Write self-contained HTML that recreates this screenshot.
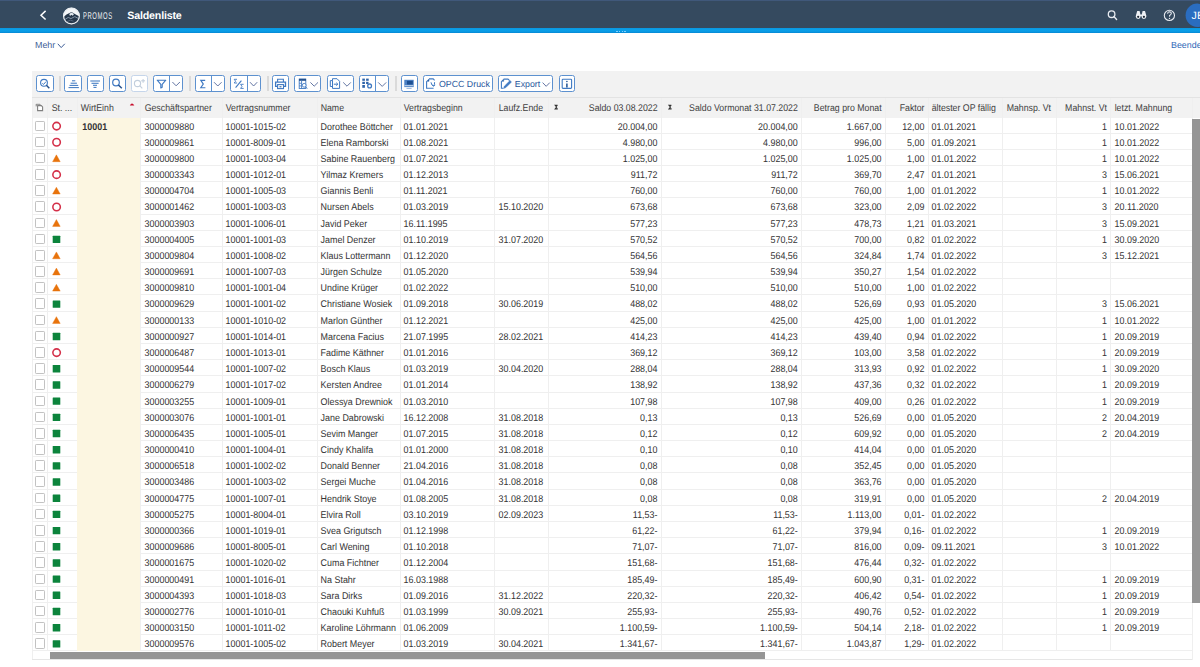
<!DOCTYPE html>
<html><head><meta charset="utf-8"><title>Saldenliste</title><style>
html,body{margin:0;padding:0;}
body{width:1200px;height:667px;overflow:hidden;position:relative;background:#fff;font-family:"Liberation Sans",sans-serif;text-rendering:geometricPrecision;}
.abs{position:absolute;}
#shell{position:absolute;left:0;top:0;width:1200px;height:28px;background:#354a5f;}
#shelltop{position:absolute;left:0;top:0;width:1200px;height:1px;background:#40587a;}
#blue{position:absolute;left:0;top:28px;width:1200px;height:5px;background:linear-gradient(#0b96dd 0,#09a0ea 40%,#0a98e2 75%,#0687d2 100%);}
.title{position:absolute;left:127.3px;top:9.4px;font-size:10.7px;letter-spacing:-0.2px;font-weight:bold;color:#fff;line-height:14px;}
.promos{position:absolute;left:83px;top:11.4px;font-size:9.8px;color:#eef0f2;line-height:12px;transform:scaleX(0.6);transform-origin:0 0;letter-spacing:1px;}
.link{position:absolute;font-size:8.9px;color:#3d5d96;line-height:12px;}
#toolbar{position:absolute;left:31.5px;top:70.5px;width:1168.5px;height:26px;background:#f2f2f2;border-bottom:1px solid #e3e3e3;}
.btn{position:absolute;top:75px;height:15.2px;border:1.15px solid #5d91cf;border-radius:2.5px;background:#fff;}
.btn.dis{border-color:#c5d5ea;}
.sep{position:absolute;top:76px;width:2px;height:14.5px;background:#dadada;}
.div{position:absolute;top:0;width:1.1px;height:15.2px;background:#5d91cf;}
.btxt{position:absolute;top:0.9px;font-size:8.8px;line-height:15.5px;color:#28579c;white-space:nowrap;}
.thead{position:absolute;left:31.8px;width:1168.2px;background:#f2f2f2;}
.cream{position:absolute;background:#fcf6e1;}
.rl{position:absolute;height:1px;background:#efefef;}
.cl{position:absolute;width:1px;background:#efefef;}
.ht{position:absolute;box-sizing:border-box;padding:0 4.1px;font-size:9.8px;transform:scaleX(0.895);transform-origin:0 0;color:#404040;white-space:nowrap;overflow:hidden;}
.td{position:absolute;box-sizing:border-box;padding:0 4.1px 0 3.95px;font-size:9.8px;transform:scaleX(0.91);transform-origin:0 0;color:#333;white-space:nowrap;overflow:hidden;}
.r{text-align:right;}
.b{font-weight:bold;padding-left:5.9px;}
.cb{position:absolute;left:34.6px;width:8.6px;height:8.6px;border:1.2px solid #c2c2c2;border-radius:1.2px;background:#fff;}
.sO{position:absolute;left:52px;width:5.6px;height:5.6px;border:1.7px solid #d62f47;border-radius:50%;}
.sA{position:absolute;left:52.7px;width:0;height:0;border-left:3.8px solid transparent;border-right:3.8px solid transparent;border-bottom:7.2px solid #e8730c;}
.sG{position:absolute;left:52.7px;width:7.6px;height:7.4px;background:#0d8a3e;border-radius:0.5px;}
#hscroll{position:absolute;left:49.7px;top:652px;width:715.8px;height:7px;background:#959595;}
.tbot{position:absolute;left:31.8px;top:659px;width:1160.7px;height:1px;background:#e6e6e6;}
#vscroll{position:absolute;left:1192px;top:119px;width:8px;height:483.6px;background:#959595;}

</style></head><body>
<div id="shell"></div><div id="shelltop"></div><div id="blue"></div>
<div class="abs" style="left:616px;top:30.6px;width:10px;height:1.2px;background:repeating-linear-gradient(90deg,#7fd0ff 0 1.5px,transparent 1.5px 2.8px);"></div>
<svg class="abs" style="left:0;top:0" width="1200" height="28" viewBox="0 0 1200 28">
  <polyline points="45.6,10.9 41,15.2 45.6,19.5" fill="none" stroke="#fff" stroke-width="1.5"/>
  <circle cx="71.45" cy="16.05" r="8.2" fill="#f4f6f8"/>
  <path d="M63.33,17.2 L66.5,14.6 L71.5,11.9 L75.8,14.6 L79.64,16.4 A8.2,8.2 0 0 1 63.33,17.2 Z" fill="#26384b"/>
  <path d="M69.2,14.1 L71.5,12.5 L74,14.1 L72.8,15.8 L71.4,14.8 L70,16 Z" fill="#e6ecf2"/>
  <path d="M64.8,19.6 L68.2,17.4 L71,18.6 L74.8,16.6 L78.6,18.6" fill="none" stroke="#8a9bb0" stroke-width="0.9"/>
  <path d="M67,21.5 L70.5,20.2 L73.5,21.2" fill="none" stroke="#5d7088" stroke-width="0.8"/>
  <circle cx="71.45" cy="16.05" r="7.9" fill="none" stroke="#e9edf1" stroke-width="1.2"/>
  <circle cx="1111.6" cy="14.2" r="3.3" fill="none" stroke="#e8ecf2" stroke-width="1.3"/>
  <line x1="1113.9" y1="16.6" x2="1116.6" y2="19.4" stroke="#e8ecf2" stroke-width="1.4" stroke-linecap="round"/>
  <path d="M1137.2,11 L1139.6,11 L1140.4,14.5 L1141.8,14.5 L1142.6,11 L1145,11 L1146.4,16 L1135.8,16 Z" fill="#eef1f5"/>
  <circle cx="1138.2" cy="16.6" r="2.4" fill="#eef1f5"/>
  <circle cx="1143.9" cy="16.6" r="2.4" fill="#eef1f5"/>
  <circle cx="1138.2" cy="16.8" r="1.1" fill="#1c2733"/>
  <circle cx="1143.9" cy="16.8" r="1.1" fill="#1c2733"/>
  <circle cx="1169.4" cy="15.4" r="5.1" fill="none" stroke="#e6eaf0" stroke-width="1.1"/>
  <path d="M1167.6,13.7 Q1167.7,11.8 1169.5,11.8 Q1171.4,11.9 1171.3,13.5 Q1171.2,14.6 1169.6,15.4 L1169.5,16.6" fill="none" stroke="#e6eaf0" stroke-width="1.1"/>
  <circle cx="1169.5" cy="18.4" r="0.7" fill="#e6eaf0"/>
  <circle cx="1197.3" cy="15.3" r="11.7" fill="#2a6dc0"/>
  <text x="1191.6" y="19" font-family="Liberation Sans" font-size="10.6" fill="#fff">JE</text>
</svg>
<div class="title">Saldenliste</div>
<div class="promos">PROMOS</div>
<div class="link" style="left:35px;top:38.6px;">Mehr</div>
<svg class="abs" style="left:57px;top:43px" width="10" height="6" viewBox="0 0 10 6"><polyline points="0.8,0.8 4.2,4.6 7.8,0.8" fill="none" stroke="#3d5d96" stroke-width="1"/></svg>
<div class="link" style="left:1171px;top:38.6px;color:#2f69b8">Beenden</div>
<div id="toolbar"></div>
<div class="sep" style="left:58.5px"></div>
<div class="sep" style="left:188.5px"></div>
<div class="sep" style="left:266.5px"></div>
<div class="sep" style="left:395px"></div>
<div class="btn" style="left:36px;width:15.5px"></div>
<div class="btn" style="left:64.4px;width:15.5px"></div>
<div class="btn" style="left:87px;width:15px"></div>
<div class="btn" style="left:108.7px;width:15px"></div>
<div class="btn dis" style="left:131px;width:15px"></div>
<div class="btn" style="left:153px;width:28px"><div class="div" style="left:15.3px"></div></div>
<div class="btn" style="left:194.7px;width:28px"><div class="div" style="left:15.3px"></div></div>
<div class="btn" style="left:230.3px;width:28.4px"><div class="div" style="left:15.7px"></div></div>
<div class="btn" style="left:272px;width:15px"></div>
<div class="btn" style="left:294.4px;width:24.5px"></div>
<div class="btn" style="left:326.5px;width:25.1px"></div>
<div class="btn" style="left:359.1px;width:28.3px"><div class="div" style="left:15.3px"></div></div>
<div class="btn" style="left:400.8px;width:15.5px"></div>
<div class="btn" style="left:422.7px;width:68px"><div class="btxt" style="left:15.3px">OPCC Druck</div></div>
<div class="btn" style="left:498.2px;width:52.5px"><div class="btxt" style="left:15.6px">Export</div></div>
<div class="btn" style="left:558.7px;width:14.7px"></div>
<svg class="abs" style="left:0;top:70px" width="600" height="28" viewBox="0 70 600 28" fill="none" stroke="#3f79c2" stroke-width="1.1">
  <!-- b1 zoom check -->
  <circle cx="44" cy="82.8" r="3.4"/>
  <line x1="46.4" y1="85.3" x2="49.3" y2="88.2" stroke="#24508c" stroke-width="1.5"/>
  <polyline points="42.3,83.4 43.6,84.4 46,81.6" stroke-width="1"/>
  <!-- b2 sort asc -->
  <g stroke-width="1.05">
  <line x1="72" y1="80.8" x2="75.3" y2="80.8"/><line x1="70.6" y1="83.2" x2="76.9" y2="83.2"/><line x1="69.5" y1="85.4" x2="78.2" y2="85.4"/><line x1="68.5" y1="87.6" x2="78.9" y2="87.6"/>
  <!-- b3 sort desc -->
  <line x1="90.3" y1="81" x2="100" y2="81"/><line x1="91.5" y1="83.3" x2="98.6" y2="83.3"/><line x1="93" y1="85.3" x2="97" y2="85.3"/><line x1="93.5" y1="87.4" x2="96.5" y2="87.4"/>
  </g>
  <!-- b4 search -->
  <circle cx="116" cy="82.5" r="3.3" stroke-width="1.2"/>
  <line x1="118.4" y1="85" x2="121.8" y2="88.3" stroke="#24508c" stroke-width="1.5"/>
  <!-- b5 disabled search plus -->
  <g stroke="#c3cfdd">
  <circle cx="137.5" cy="83.5" r="3.1"/><line x1="139.7" y1="85.7" x2="142.3" y2="88.3"/>
  <line x1="141.2" y1="80.8" x2="145" y2="80.8"/><line x1="143.1" y1="78.9" x2="143.1" y2="82.7"/>
  </g>
  <!-- filter -->
  <path d="M157.2,80.2 L165.8,80.2 L162.2,84.4 L162.2,87.2 L160.8,88 L160.8,84.4 Z" stroke-width="1.1" stroke-linejoin="round"/>
  <polyline points="172.4,82 176.1,85.8 179.9,82" stroke="#52669a" stroke-width="0.9"/>
  <!-- sigma -->
  <path d="M205.2,80.4 L200.8,80.4 L203.3,84.1 L200.8,87.7 L205.4,87.7" stroke-width="1.15"/>
  <polyline points="214,82.2 217.8,86 221.6,82.2" stroke="#52669a" stroke-width="0.9"/>
  <!-- sigma/sigma -->
  <path d="M237,79.3 L234.2,79.3 L235.6,81.2 L234.2,83 L237.1,83" stroke-width="0.9"/>
  <line x1="235.6" y1="87.6" x2="241.4" y2="80.6" stroke-width="1.1"/>
  <path d="M243.6,84.3 L240.6,84.3 L242,86.4 L240.6,88.4 L243.7,88.4" stroke-width="0.9"/>
  <polyline points="250,82.2 253.6,86 257.2,82.2" stroke="#52669a" stroke-width="0.9"/>
  <!-- print -->
  <path d="M277.6,82 L277.6,79.3 L283.4,79.3 L283.4,82" stroke-width="1.1"/>
  <path d="M277.4,86.3 L275.6,86.3 L275.6,82.2 L285.5,82.2 L285.5,86.3 L283.6,86.3" stroke-width="1.3"/>
  <rect x="277.6" y="84.6" width="5.9" height="4" stroke-width="1.1"/>
  <line x1="279.5" y1="86.8" x2="281.5" y2="86.8" stroke="#24508c" stroke-width="1"/>
  <!-- b col icon -->
  <rect x="299.2" y="79.1" width="6.6" height="9.4" stroke-width="0.9"/>
  <rect x="299" y="78.8" width="7" height="2" fill="#24508c" stroke="none"/>
  <line x1="301.6" y1="80.5" x2="301.6" y2="88.6" stroke-width="0.9"/>
  <line x1="299.2" y1="83.3" x2="301.6" y2="83.3" stroke-width="0.8"/>
  <line x1="299.2" y1="85.9" x2="301.6" y2="85.9" stroke-width="0.8"/>
  <circle cx="304.2" cy="85.3" r="1.9" stroke-width="0.9" fill="#fff"/>
  <line x1="305.5" y1="86.7" x2="307.2" y2="88.6" stroke-width="1"/>
  <polyline points="310.4,82.4 314.2,86.2 318,82.4" stroke="#52669a" stroke-width="0.9"/>
  <!-- copy icon -->
  <path d="M332.5,80.5 L332.5,78.7 L337,78.7 L339.6,81.3 L339.6,88.4 L332.5,88.4 Z" stroke-width="1"/>
  <path d="M330.3,80.6 L332.6,80.6 M330.3,80.6 L330.3,86.5 L332.5,86.5" stroke-width="1"/>
  <line x1="333.8" y1="84.2" x2="337.8" y2="84.2" stroke-width="1"/><polyline points="336.3,82.7 337.9,84.2 336.3,85.7" stroke-width="0.9"/>
  <polyline points="343.2,82.4 347,86.2 350.8,82.4" stroke="#52669a" stroke-width="0.9"/>
  <!-- settings table icon -->
  <g fill="#2e63a8" stroke="none">
  <rect x="362.3" y="78.6" width="2.6" height="2.2"/><rect x="362.3" y="81.8" width="2.6" height="2.2"/><rect x="362.3" y="85" width="2.6" height="2.8"/>
  <rect x="366.1" y="78.6" width="2.6" height="2.2"/><rect x="366.1" y="81.8" width="2.4" height="2.2"/>
  </g>
  <circle cx="369.6" cy="85.9" r="1.9" stroke-width="1.3"/>
  <polyline points="378.2,82.4 382.2,86.4 386.2,82.4" stroke="#52669a" stroke-width="0.9"/>
  <!-- screen -->
  <rect x="404.3" y="79.8" width="9.4" height="7.3" fill="#4b80c4" stroke="none"/>
  <rect x="407" y="80.9" width="5.8" height="3.6" fill="#1d4f91" stroke="none"/>
  <line x1="404.6" y1="85.7" x2="413.4" y2="85.7" stroke="#fff" stroke-width="0.7"/>
  <line x1="406.5" y1="88.4" x2="411.6" y2="88.4" stroke="#8aaedb" stroke-width="0.9"/>
  <!-- opcc icon -->
  <path d="M429,78.9 L433.2,78.9 L434.6,80.3 M426.6,81.3 L426.6,88.2 L433.6,88.2" stroke-width="1.1"/>
  <path d="M426.6,81.3 L429,78.9 L429,81.3 Z" fill="#1d4f91" stroke-width="0.6"/>
  <path d="M431,82.3 Q431.5,85.4 433.4,86 Q434.8,84.8 434.6,82.2" stroke-width="1"/><polyline points="432.2,84.6 433.4,86.2 435.2,85" stroke-width="0.9"/>
  <!-- export icon -->
  <path d="M503.7,79.1 L508,79.1 L509.6,80.6 M501.4,81.3 L501.4,88.2 L503.5,88.2" stroke-width="1.1"/>
  <path d="M501.4,81.3 L503.7,79.1 L503.7,81.3 Z" fill="#1d4f91" stroke-width="0.6"/>
  <path d="M503.8,88.3 L504.4,86.2 L510,80.6 L511.4,82 L505.8,87.6 Z" fill="#3f79c2" stroke-width="0.6"/>
  <polyline points="542.6,82.6 546.2,86.3 549.8,82.6" stroke="#52669a" stroke-width="0.9"/>
  <!-- info -->
  <rect x="562.2" y="79.3" width="9.4" height="9.1" rx="0.8" stroke-width="1.1"/>
  <line x1="566.9" y1="83.4" x2="566.9" y2="87.4" stroke="#1d4f91" stroke-width="1.5"/>
  <circle cx="566.9" cy="81.5" r="0.8" fill="#1d4f91" stroke="none"/>
</svg>

<div id="tbl">
<div class="thead" style="top:97.50px;height:20.70px"></div>
<div class="cream" style="left:77.30px;width:63.40px;top:117.50px;height:533.94px"></div>
<div class="rl" style="top:132.68px;left:31.8px;width:45.5px"></div>
<div class="rl" style="top:132.68px;left:140.7px;width:1051.3px"></div>
<div class="rl" style="top:148.86px;left:31.8px;width:45.5px"></div>
<div class="rl" style="top:148.86px;left:140.7px;width:1051.3px"></div>
<div class="rl" style="top:165.04px;left:31.8px;width:45.5px"></div>
<div class="rl" style="top:165.04px;left:140.7px;width:1051.3px"></div>
<div class="rl" style="top:181.22px;left:31.8px;width:45.5px"></div>
<div class="rl" style="top:181.22px;left:140.7px;width:1051.3px"></div>
<div class="rl" style="top:197.40px;left:31.8px;width:45.5px"></div>
<div class="rl" style="top:197.40px;left:140.7px;width:1051.3px"></div>
<div class="rl" style="top:213.58px;left:31.8px;width:45.5px"></div>
<div class="rl" style="top:213.58px;left:140.7px;width:1051.3px"></div>
<div class="rl" style="top:229.76px;left:31.8px;width:45.5px"></div>
<div class="rl" style="top:229.76px;left:140.7px;width:1051.3px"></div>
<div class="rl" style="top:245.94px;left:31.8px;width:45.5px"></div>
<div class="rl" style="top:245.94px;left:140.7px;width:1051.3px"></div>
<div class="rl" style="top:262.12px;left:31.8px;width:45.5px"></div>
<div class="rl" style="top:262.12px;left:140.7px;width:1051.3px"></div>
<div class="rl" style="top:278.30px;left:31.8px;width:45.5px"></div>
<div class="rl" style="top:278.30px;left:140.7px;width:1051.3px"></div>
<div class="rl" style="top:294.48px;left:31.8px;width:45.5px"></div>
<div class="rl" style="top:294.48px;left:140.7px;width:1051.3px"></div>
<div class="rl" style="top:310.66px;left:31.8px;width:45.5px"></div>
<div class="rl" style="top:310.66px;left:140.7px;width:1051.3px"></div>
<div class="rl" style="top:326.84px;left:31.8px;width:45.5px"></div>
<div class="rl" style="top:326.84px;left:140.7px;width:1051.3px"></div>
<div class="rl" style="top:343.02px;left:31.8px;width:45.5px"></div>
<div class="rl" style="top:343.02px;left:140.7px;width:1051.3px"></div>
<div class="rl" style="top:359.20px;left:31.8px;width:45.5px"></div>
<div class="rl" style="top:359.20px;left:140.7px;width:1051.3px"></div>
<div class="rl" style="top:375.38px;left:31.8px;width:45.5px"></div>
<div class="rl" style="top:375.38px;left:140.7px;width:1051.3px"></div>
<div class="rl" style="top:391.56px;left:31.8px;width:45.5px"></div>
<div class="rl" style="top:391.56px;left:140.7px;width:1051.3px"></div>
<div class="rl" style="top:407.74px;left:31.8px;width:45.5px"></div>
<div class="rl" style="top:407.74px;left:140.7px;width:1051.3px"></div>
<div class="rl" style="top:423.92px;left:31.8px;width:45.5px"></div>
<div class="rl" style="top:423.92px;left:140.7px;width:1051.3px"></div>
<div class="rl" style="top:440.10px;left:31.8px;width:45.5px"></div>
<div class="rl" style="top:440.10px;left:140.7px;width:1051.3px"></div>
<div class="rl" style="top:456.28px;left:31.8px;width:45.5px"></div>
<div class="rl" style="top:456.28px;left:140.7px;width:1051.3px"></div>
<div class="rl" style="top:472.46px;left:31.8px;width:45.5px"></div>
<div class="rl" style="top:472.46px;left:140.7px;width:1051.3px"></div>
<div class="rl" style="top:488.64px;left:31.8px;width:45.5px"></div>
<div class="rl" style="top:488.64px;left:140.7px;width:1051.3px"></div>
<div class="rl" style="top:504.82px;left:31.8px;width:45.5px"></div>
<div class="rl" style="top:504.82px;left:140.7px;width:1051.3px"></div>
<div class="rl" style="top:521.00px;left:31.8px;width:45.5px"></div>
<div class="rl" style="top:521.00px;left:140.7px;width:1051.3px"></div>
<div class="rl" style="top:537.18px;left:31.8px;width:45.5px"></div>
<div class="rl" style="top:537.18px;left:140.7px;width:1051.3px"></div>
<div class="rl" style="top:553.36px;left:31.8px;width:45.5px"></div>
<div class="rl" style="top:553.36px;left:140.7px;width:1051.3px"></div>
<div class="rl" style="top:569.54px;left:31.8px;width:45.5px"></div>
<div class="rl" style="top:569.54px;left:140.7px;width:1051.3px"></div>
<div class="rl" style="top:585.72px;left:31.8px;width:45.5px"></div>
<div class="rl" style="top:585.72px;left:140.7px;width:1051.3px"></div>
<div class="rl" style="top:601.90px;left:31.8px;width:45.5px"></div>
<div class="rl" style="top:601.90px;left:140.7px;width:1051.3px"></div>
<div class="rl" style="top:618.08px;left:31.8px;width:45.5px"></div>
<div class="rl" style="top:618.08px;left:140.7px;width:1051.3px"></div>
<div class="rl" style="top:634.26px;left:31.8px;width:45.5px"></div>
<div class="rl" style="top:634.26px;left:140.7px;width:1051.3px"></div>
<div class="rl" style="top:650.44px;left:31.8px;width:45.5px"></div>
<div class="rl" style="top:650.44px;left:140.7px;width:1051.3px"></div>
<div class="cl" style="left:47.00px;top:97.50px;height:553.94px"></div>
<div class="cl" style="left:140.20px;top:97.50px;height:553.94px"></div>
<div class="cl" style="left:221.70px;top:97.50px;height:553.94px"></div>
<div class="cl" style="left:316.50px;top:97.50px;height:553.94px"></div>
<div class="cl" style="left:399.50px;top:97.50px;height:553.94px"></div>
<div class="cl" style="left:494.40px;top:97.50px;height:553.94px"></div>
<div class="cl" style="left:547.50px;top:97.50px;height:553.94px"></div>
<div class="cl" style="left:660.70px;top:97.50px;height:553.94px"></div>
<div class="cl" style="left:801.20px;top:97.50px;height:553.94px"></div>
<div class="cl" style="left:884.50px;top:97.50px;height:553.94px"></div>
<div class="cl" style="left:927.70px;top:97.50px;height:553.94px"></div>
<div class="cl" style="left:1002.10px;top:97.50px;height:553.94px"></div>
<div class="cl" style="left:1055.70px;top:97.50px;height:553.94px"></div>
<div class="cl" style="left:1110.40px;top:97.50px;height:553.94px"></div>
<div class="cl" style="left:77.3px;top:97.50px;height:20.00px"></div>
<div class="cl" style="left:140.2px;top:97.50px;height:20.00px"></div>
<div class="cl" style="left:31.8px;top:97.50px;height:562.00px"></div>
<div class="cl" style="left:1192px;top:97.50px;height:562.00px"></div>
<div class="ht" style="left:47.50px;width:33.30px;top:98.80px;height:20.00px;line-height:20.00px">St. ...</div>
<div class="ht" style="left:77.30px;width:70.84px;top:98.80px;height:20.00px;line-height:20.00px">WirtEinh</div>
<div class="ht" style="left:140.70px;width:91.06px;top:98.80px;height:20.00px;line-height:20.00px">Geschäftspartner</div>
<div class="ht" style="left:222.20px;width:105.92px;top:98.80px;height:20.00px;line-height:20.00px">Vertragsnummer</div>
<div class="ht" style="left:317.00px;width:92.74px;top:98.80px;height:20.00px;line-height:20.00px">Name</div>
<div class="ht" style="left:400.00px;width:106.03px;top:98.80px;height:20.00px;line-height:20.00px">Vertragsbeginn</div>
<div class="ht" style="left:494.90px;width:59.33px;top:98.80px;height:20.00px;line-height:20.00px">Laufz.Ende</div>
<div class="ht r" style="left:548.00px;width:126.48px;top:98.80px;height:20.00px;line-height:20.00px">Saldo 03.08.2022</div>
<div class="ht r" style="left:661.20px;width:156.98px;top:98.80px;height:20.00px;line-height:20.00px">Saldo Vormonat 31.07.2022</div>
<div class="ht r" style="left:801.70px;width:93.07px;top:98.80px;height:20.00px;line-height:20.00px">Betrag pro Monat</div>
<div class="ht r" style="left:885.00px;width:48.27px;top:98.80px;height:20.00px;line-height:20.00px">Faktor</div>
<div class="ht" style="left:928.20px;width:83.13px;top:98.80px;height:20.00px;line-height:20.00px">ältester OP fällig</div>
<div class="ht" style="left:1002.60px;width:59.89px;top:98.80px;height:20.00px;line-height:20.00px">Mahnsp. Vt</div>
<div class="ht r" style="left:1056.20px;width:61.12px;top:98.80px;height:20.00px;line-height:20.00px">Mahnst. Vt</div>
<div class="ht" style="left:1110.90px;width:84.69px;top:98.80px;height:20.00px;line-height:20.00px">letzt. Mahnung</div>
<div class="cb" style="top:120.50px"></div>
<div class="td b" style="left:77.30px;width:69.67px;top:119.50px;height:16.18px;line-height:16.18px">10001</div>
<div class="td" style="left:140.70px;width:89.56px;top:119.50px;height:16.18px;line-height:16.18px">3000009880</div>
<div class="td" style="left:222.20px;width:104.18px;top:119.50px;height:16.18px;line-height:16.18px">10001-1015-02</div>
<div class="td" style="left:317.00px;width:91.21px;top:119.50px;height:16.18px;line-height:16.18px">Dorothee Böttcher</div>
<div class="td" style="left:400.00px;width:104.29px;top:119.50px;height:16.18px;line-height:16.18px">01.01.2021</div>
<div class="td r" style="left:548.00px;width:124.40px;top:119.50px;height:16.18px;line-height:16.18px">20.004,00</div>
<div class="td r" style="left:661.20px;width:154.40px;top:119.50px;height:16.18px;line-height:16.18px">20.004,00</div>
<div class="td r" style="left:801.70px;width:91.54px;top:119.50px;height:16.18px;line-height:16.18px">1.667,00</div>
<div class="td r" style="left:885.00px;width:47.47px;top:119.50px;height:16.18px;line-height:16.18px">12,00</div>
<div class="td" style="left:928.20px;width:81.76px;top:119.50px;height:16.18px;line-height:16.18px">01.01.2021</div>
<div class="td r" style="left:1056.20px;width:60.11px;top:119.50px;height:16.18px;line-height:16.18px">1</div>
<div class="td" style="left:1110.90px;width:83.30px;top:119.50px;height:16.18px;line-height:16.18px">10.01.2022</div>
<div class="cb" style="top:136.68px"></div>
<div class="td" style="left:140.70px;width:89.56px;top:135.68px;height:16.18px;line-height:16.18px">3000009861</div>
<div class="td" style="left:222.20px;width:104.18px;top:135.68px;height:16.18px;line-height:16.18px">10001-8009-01</div>
<div class="td" style="left:317.00px;width:91.21px;top:135.68px;height:16.18px;line-height:16.18px">Elena Ramborski</div>
<div class="td" style="left:400.00px;width:104.29px;top:135.68px;height:16.18px;line-height:16.18px">01.08.2021</div>
<div class="td r" style="left:548.00px;width:124.40px;top:135.68px;height:16.18px;line-height:16.18px">4.980,00</div>
<div class="td r" style="left:661.20px;width:154.40px;top:135.68px;height:16.18px;line-height:16.18px">4.980,00</div>
<div class="td r" style="left:801.70px;width:91.54px;top:135.68px;height:16.18px;line-height:16.18px">996,00</div>
<div class="td r" style="left:885.00px;width:47.47px;top:135.68px;height:16.18px;line-height:16.18px">5,00</div>
<div class="td" style="left:928.20px;width:81.76px;top:135.68px;height:16.18px;line-height:16.18px">01.09.2021</div>
<div class="td r" style="left:1056.20px;width:60.11px;top:135.68px;height:16.18px;line-height:16.18px">1</div>
<div class="td" style="left:1110.90px;width:83.30px;top:135.68px;height:16.18px;line-height:16.18px">10.01.2022</div>
<div class="cb" style="top:152.86px"></div>
<div class="td" style="left:140.70px;width:89.56px;top:151.86px;height:16.18px;line-height:16.18px">3000009800</div>
<div class="td" style="left:222.20px;width:104.18px;top:151.86px;height:16.18px;line-height:16.18px">10001-1003-04</div>
<div class="td" style="left:317.00px;width:91.21px;top:151.86px;height:16.18px;line-height:16.18px">Sabine Rauenberg</div>
<div class="td" style="left:400.00px;width:104.29px;top:151.86px;height:16.18px;line-height:16.18px">01.07.2021</div>
<div class="td r" style="left:548.00px;width:124.40px;top:151.86px;height:16.18px;line-height:16.18px">1.025,00</div>
<div class="td r" style="left:661.20px;width:154.40px;top:151.86px;height:16.18px;line-height:16.18px">1.025,00</div>
<div class="td r" style="left:801.70px;width:91.54px;top:151.86px;height:16.18px;line-height:16.18px">1.025,00</div>
<div class="td r" style="left:885.00px;width:47.47px;top:151.86px;height:16.18px;line-height:16.18px">1,00</div>
<div class="td" style="left:928.20px;width:81.76px;top:151.86px;height:16.18px;line-height:16.18px">01.01.2022</div>
<div class="td r" style="left:1056.20px;width:60.11px;top:151.86px;height:16.18px;line-height:16.18px">1</div>
<div class="td" style="left:1110.90px;width:83.30px;top:151.86px;height:16.18px;line-height:16.18px">10.01.2022</div>
<div class="cb" style="top:169.04px"></div>
<div class="td" style="left:140.70px;width:89.56px;top:168.04px;height:16.18px;line-height:16.18px">3000003343</div>
<div class="td" style="left:222.20px;width:104.18px;top:168.04px;height:16.18px;line-height:16.18px">10001-1012-01</div>
<div class="td" style="left:317.00px;width:91.21px;top:168.04px;height:16.18px;line-height:16.18px">Yilmaz Kremers</div>
<div class="td" style="left:400.00px;width:104.29px;top:168.04px;height:16.18px;line-height:16.18px">01.12.2013</div>
<div class="td r" style="left:548.00px;width:124.40px;top:168.04px;height:16.18px;line-height:16.18px">911,72</div>
<div class="td r" style="left:661.20px;width:154.40px;top:168.04px;height:16.18px;line-height:16.18px">911,72</div>
<div class="td r" style="left:801.70px;width:91.54px;top:168.04px;height:16.18px;line-height:16.18px">369,70</div>
<div class="td r" style="left:885.00px;width:47.47px;top:168.04px;height:16.18px;line-height:16.18px">2,47</div>
<div class="td" style="left:928.20px;width:81.76px;top:168.04px;height:16.18px;line-height:16.18px">01.01.2021</div>
<div class="td r" style="left:1056.20px;width:60.11px;top:168.04px;height:16.18px;line-height:16.18px">3</div>
<div class="td" style="left:1110.90px;width:83.30px;top:168.04px;height:16.18px;line-height:16.18px">15.06.2021</div>
<div class="cb" style="top:185.22px"></div>
<div class="td" style="left:140.70px;width:89.56px;top:184.22px;height:16.18px;line-height:16.18px">3000004704</div>
<div class="td" style="left:222.20px;width:104.18px;top:184.22px;height:16.18px;line-height:16.18px">10001-1005-03</div>
<div class="td" style="left:317.00px;width:91.21px;top:184.22px;height:16.18px;line-height:16.18px">Giannis Benli</div>
<div class="td" style="left:400.00px;width:104.29px;top:184.22px;height:16.18px;line-height:16.18px">01.11.2021</div>
<div class="td r" style="left:548.00px;width:124.40px;top:184.22px;height:16.18px;line-height:16.18px">760,00</div>
<div class="td r" style="left:661.20px;width:154.40px;top:184.22px;height:16.18px;line-height:16.18px">760,00</div>
<div class="td r" style="left:801.70px;width:91.54px;top:184.22px;height:16.18px;line-height:16.18px">760,00</div>
<div class="td r" style="left:885.00px;width:47.47px;top:184.22px;height:16.18px;line-height:16.18px">1,00</div>
<div class="td" style="left:928.20px;width:81.76px;top:184.22px;height:16.18px;line-height:16.18px">01.01.2022</div>
<div class="td r" style="left:1056.20px;width:60.11px;top:184.22px;height:16.18px;line-height:16.18px">1</div>
<div class="td" style="left:1110.90px;width:83.30px;top:184.22px;height:16.18px;line-height:16.18px">10.01.2022</div>
<div class="cb" style="top:201.40px"></div>
<div class="td" style="left:140.70px;width:89.56px;top:200.40px;height:16.18px;line-height:16.18px">3000001462</div>
<div class="td" style="left:222.20px;width:104.18px;top:200.40px;height:16.18px;line-height:16.18px">10001-1003-03</div>
<div class="td" style="left:317.00px;width:91.21px;top:200.40px;height:16.18px;line-height:16.18px">Nursen Abels</div>
<div class="td" style="left:400.00px;width:104.29px;top:200.40px;height:16.18px;line-height:16.18px">01.03.2019</div>
<div class="td" style="left:494.90px;width:58.35px;top:200.40px;height:16.18px;line-height:16.18px">15.10.2020</div>
<div class="td r" style="left:548.00px;width:124.40px;top:200.40px;height:16.18px;line-height:16.18px">673,68</div>
<div class="td r" style="left:661.20px;width:154.40px;top:200.40px;height:16.18px;line-height:16.18px">673,68</div>
<div class="td r" style="left:801.70px;width:91.54px;top:200.40px;height:16.18px;line-height:16.18px">323,00</div>
<div class="td r" style="left:885.00px;width:47.47px;top:200.40px;height:16.18px;line-height:16.18px">2,09</div>
<div class="td" style="left:928.20px;width:81.76px;top:200.40px;height:16.18px;line-height:16.18px">01.02.2022</div>
<div class="td r" style="left:1056.20px;width:60.11px;top:200.40px;height:16.18px;line-height:16.18px">3</div>
<div class="td" style="left:1110.90px;width:83.30px;top:200.40px;height:16.18px;line-height:16.18px">20.11.2020</div>
<div class="cb" style="top:217.58px"></div>
<div class="td" style="left:140.70px;width:89.56px;top:216.58px;height:16.18px;line-height:16.18px">3000003903</div>
<div class="td" style="left:222.20px;width:104.18px;top:216.58px;height:16.18px;line-height:16.18px">10001-1006-01</div>
<div class="td" style="left:317.00px;width:91.21px;top:216.58px;height:16.18px;line-height:16.18px">Javid Peker</div>
<div class="td" style="left:400.00px;width:104.29px;top:216.58px;height:16.18px;line-height:16.18px">16.11.1995</div>
<div class="td r" style="left:548.00px;width:124.40px;top:216.58px;height:16.18px;line-height:16.18px">577,23</div>
<div class="td r" style="left:661.20px;width:154.40px;top:216.58px;height:16.18px;line-height:16.18px">577,23</div>
<div class="td r" style="left:801.70px;width:91.54px;top:216.58px;height:16.18px;line-height:16.18px">478,73</div>
<div class="td r" style="left:885.00px;width:47.47px;top:216.58px;height:16.18px;line-height:16.18px">1,21</div>
<div class="td" style="left:928.20px;width:81.76px;top:216.58px;height:16.18px;line-height:16.18px">01.03.2021</div>
<div class="td r" style="left:1056.20px;width:60.11px;top:216.58px;height:16.18px;line-height:16.18px">3</div>
<div class="td" style="left:1110.90px;width:83.30px;top:216.58px;height:16.18px;line-height:16.18px">15.09.2021</div>
<div class="cb" style="top:233.76px"></div>
<div class="td" style="left:140.70px;width:89.56px;top:232.76px;height:16.18px;line-height:16.18px">3000004005</div>
<div class="td" style="left:222.20px;width:104.18px;top:232.76px;height:16.18px;line-height:16.18px">10001-1001-03</div>
<div class="td" style="left:317.00px;width:91.21px;top:232.76px;height:16.18px;line-height:16.18px">Jamel Denzer</div>
<div class="td" style="left:400.00px;width:104.29px;top:232.76px;height:16.18px;line-height:16.18px">01.10.2019</div>
<div class="td" style="left:494.90px;width:58.35px;top:232.76px;height:16.18px;line-height:16.18px">31.07.2020</div>
<div class="td r" style="left:548.00px;width:124.40px;top:232.76px;height:16.18px;line-height:16.18px">570,52</div>
<div class="td r" style="left:661.20px;width:154.40px;top:232.76px;height:16.18px;line-height:16.18px">570,52</div>
<div class="td r" style="left:801.70px;width:91.54px;top:232.76px;height:16.18px;line-height:16.18px">700,00</div>
<div class="td r" style="left:885.00px;width:47.47px;top:232.76px;height:16.18px;line-height:16.18px">0,82</div>
<div class="td" style="left:928.20px;width:81.76px;top:232.76px;height:16.18px;line-height:16.18px">01.02.2022</div>
<div class="td r" style="left:1056.20px;width:60.11px;top:232.76px;height:16.18px;line-height:16.18px">1</div>
<div class="td" style="left:1110.90px;width:83.30px;top:232.76px;height:16.18px;line-height:16.18px">30.09.2020</div>
<div class="cb" style="top:249.94px"></div>
<div class="td" style="left:140.70px;width:89.56px;top:248.94px;height:16.18px;line-height:16.18px">3000009804</div>
<div class="td" style="left:222.20px;width:104.18px;top:248.94px;height:16.18px;line-height:16.18px">10001-1008-02</div>
<div class="td" style="left:317.00px;width:91.21px;top:248.94px;height:16.18px;line-height:16.18px">Klaus Lottermann</div>
<div class="td" style="left:400.00px;width:104.29px;top:248.94px;height:16.18px;line-height:16.18px">01.12.2020</div>
<div class="td r" style="left:548.00px;width:124.40px;top:248.94px;height:16.18px;line-height:16.18px">564,56</div>
<div class="td r" style="left:661.20px;width:154.40px;top:248.94px;height:16.18px;line-height:16.18px">564,56</div>
<div class="td r" style="left:801.70px;width:91.54px;top:248.94px;height:16.18px;line-height:16.18px">324,84</div>
<div class="td r" style="left:885.00px;width:47.47px;top:248.94px;height:16.18px;line-height:16.18px">1,74</div>
<div class="td" style="left:928.20px;width:81.76px;top:248.94px;height:16.18px;line-height:16.18px">01.02.2022</div>
<div class="td r" style="left:1056.20px;width:60.11px;top:248.94px;height:16.18px;line-height:16.18px">3</div>
<div class="td" style="left:1110.90px;width:83.30px;top:248.94px;height:16.18px;line-height:16.18px">15.12.2021</div>
<div class="cb" style="top:266.12px"></div>
<div class="td" style="left:140.70px;width:89.56px;top:265.12px;height:16.18px;line-height:16.18px">3000009691</div>
<div class="td" style="left:222.20px;width:104.18px;top:265.12px;height:16.18px;line-height:16.18px">10001-1007-03</div>
<div class="td" style="left:317.00px;width:91.21px;top:265.12px;height:16.18px;line-height:16.18px">Jürgen Schulze</div>
<div class="td" style="left:400.00px;width:104.29px;top:265.12px;height:16.18px;line-height:16.18px">01.05.2020</div>
<div class="td r" style="left:548.00px;width:124.40px;top:265.12px;height:16.18px;line-height:16.18px">539,94</div>
<div class="td r" style="left:661.20px;width:154.40px;top:265.12px;height:16.18px;line-height:16.18px">539,94</div>
<div class="td r" style="left:801.70px;width:91.54px;top:265.12px;height:16.18px;line-height:16.18px">350,27</div>
<div class="td r" style="left:885.00px;width:47.47px;top:265.12px;height:16.18px;line-height:16.18px">1,54</div>
<div class="td" style="left:928.20px;width:81.76px;top:265.12px;height:16.18px;line-height:16.18px">01.02.2022</div>
<div class="cb" style="top:282.30px"></div>
<div class="td" style="left:140.70px;width:89.56px;top:281.30px;height:16.18px;line-height:16.18px">3000009810</div>
<div class="td" style="left:222.20px;width:104.18px;top:281.30px;height:16.18px;line-height:16.18px">10001-1001-04</div>
<div class="td" style="left:317.00px;width:91.21px;top:281.30px;height:16.18px;line-height:16.18px">Undine Krüger</div>
<div class="td" style="left:400.00px;width:104.29px;top:281.30px;height:16.18px;line-height:16.18px">01.02.2022</div>
<div class="td r" style="left:548.00px;width:124.40px;top:281.30px;height:16.18px;line-height:16.18px">510,00</div>
<div class="td r" style="left:661.20px;width:154.40px;top:281.30px;height:16.18px;line-height:16.18px">510,00</div>
<div class="td r" style="left:801.70px;width:91.54px;top:281.30px;height:16.18px;line-height:16.18px">510,00</div>
<div class="td r" style="left:885.00px;width:47.47px;top:281.30px;height:16.18px;line-height:16.18px">1,00</div>
<div class="td" style="left:928.20px;width:81.76px;top:281.30px;height:16.18px;line-height:16.18px">01.02.2022</div>
<div class="cb" style="top:298.48px"></div>
<div class="td" style="left:140.70px;width:89.56px;top:297.48px;height:16.18px;line-height:16.18px">3000009629</div>
<div class="td" style="left:222.20px;width:104.18px;top:297.48px;height:16.18px;line-height:16.18px">10001-1001-02</div>
<div class="td" style="left:317.00px;width:91.21px;top:297.48px;height:16.18px;line-height:16.18px">Christiane Wosiek</div>
<div class="td" style="left:400.00px;width:104.29px;top:297.48px;height:16.18px;line-height:16.18px">01.09.2018</div>
<div class="td" style="left:494.90px;width:58.35px;top:297.48px;height:16.18px;line-height:16.18px">30.06.2019</div>
<div class="td r" style="left:548.00px;width:124.40px;top:297.48px;height:16.18px;line-height:16.18px">488,02</div>
<div class="td r" style="left:661.20px;width:154.40px;top:297.48px;height:16.18px;line-height:16.18px">488,02</div>
<div class="td r" style="left:801.70px;width:91.54px;top:297.48px;height:16.18px;line-height:16.18px">526,69</div>
<div class="td r" style="left:885.00px;width:47.47px;top:297.48px;height:16.18px;line-height:16.18px">0,93</div>
<div class="td" style="left:928.20px;width:81.76px;top:297.48px;height:16.18px;line-height:16.18px">01.05.2020</div>
<div class="td r" style="left:1056.20px;width:60.11px;top:297.48px;height:16.18px;line-height:16.18px">3</div>
<div class="td" style="left:1110.90px;width:83.30px;top:297.48px;height:16.18px;line-height:16.18px">15.06.2021</div>
<div class="cb" style="top:314.66px"></div>
<div class="td" style="left:140.70px;width:89.56px;top:313.66px;height:16.18px;line-height:16.18px">3000000133</div>
<div class="td" style="left:222.20px;width:104.18px;top:313.66px;height:16.18px;line-height:16.18px">10001-1010-02</div>
<div class="td" style="left:317.00px;width:91.21px;top:313.66px;height:16.18px;line-height:16.18px">Marlon Günther</div>
<div class="td" style="left:400.00px;width:104.29px;top:313.66px;height:16.18px;line-height:16.18px">01.12.2021</div>
<div class="td r" style="left:548.00px;width:124.40px;top:313.66px;height:16.18px;line-height:16.18px">425,00</div>
<div class="td r" style="left:661.20px;width:154.40px;top:313.66px;height:16.18px;line-height:16.18px">425,00</div>
<div class="td r" style="left:801.70px;width:91.54px;top:313.66px;height:16.18px;line-height:16.18px">425,00</div>
<div class="td r" style="left:885.00px;width:47.47px;top:313.66px;height:16.18px;line-height:16.18px">1,00</div>
<div class="td" style="left:928.20px;width:81.76px;top:313.66px;height:16.18px;line-height:16.18px">01.01.2022</div>
<div class="td r" style="left:1056.20px;width:60.11px;top:313.66px;height:16.18px;line-height:16.18px">1</div>
<div class="td" style="left:1110.90px;width:83.30px;top:313.66px;height:16.18px;line-height:16.18px">10.01.2022</div>
<div class="cb" style="top:330.84px"></div>
<div class="td" style="left:140.70px;width:89.56px;top:329.84px;height:16.18px;line-height:16.18px">3000000927</div>
<div class="td" style="left:222.20px;width:104.18px;top:329.84px;height:16.18px;line-height:16.18px">10001-1014-01</div>
<div class="td" style="left:317.00px;width:91.21px;top:329.84px;height:16.18px;line-height:16.18px">Marcena Facius</div>
<div class="td" style="left:400.00px;width:104.29px;top:329.84px;height:16.18px;line-height:16.18px">21.07.1995</div>
<div class="td" style="left:494.90px;width:58.35px;top:329.84px;height:16.18px;line-height:16.18px">28.02.2021</div>
<div class="td r" style="left:548.00px;width:124.40px;top:329.84px;height:16.18px;line-height:16.18px">414,23</div>
<div class="td r" style="left:661.20px;width:154.40px;top:329.84px;height:16.18px;line-height:16.18px">414,23</div>
<div class="td r" style="left:801.70px;width:91.54px;top:329.84px;height:16.18px;line-height:16.18px">439,40</div>
<div class="td r" style="left:885.00px;width:47.47px;top:329.84px;height:16.18px;line-height:16.18px">0,94</div>
<div class="td" style="left:928.20px;width:81.76px;top:329.84px;height:16.18px;line-height:16.18px">01.02.2022</div>
<div class="td r" style="left:1056.20px;width:60.11px;top:329.84px;height:16.18px;line-height:16.18px">1</div>
<div class="td" style="left:1110.90px;width:83.30px;top:329.84px;height:16.18px;line-height:16.18px">20.09.2019</div>
<div class="cb" style="top:347.02px"></div>
<div class="td" style="left:140.70px;width:89.56px;top:346.02px;height:16.18px;line-height:16.18px">3000006487</div>
<div class="td" style="left:222.20px;width:104.18px;top:346.02px;height:16.18px;line-height:16.18px">10001-1013-01</div>
<div class="td" style="left:317.00px;width:91.21px;top:346.02px;height:16.18px;line-height:16.18px">Fadime Käthner</div>
<div class="td" style="left:400.00px;width:104.29px;top:346.02px;height:16.18px;line-height:16.18px">01.01.2016</div>
<div class="td r" style="left:548.00px;width:124.40px;top:346.02px;height:16.18px;line-height:16.18px">369,12</div>
<div class="td r" style="left:661.20px;width:154.40px;top:346.02px;height:16.18px;line-height:16.18px">369,12</div>
<div class="td r" style="left:801.70px;width:91.54px;top:346.02px;height:16.18px;line-height:16.18px">103,00</div>
<div class="td r" style="left:885.00px;width:47.47px;top:346.02px;height:16.18px;line-height:16.18px">3,58</div>
<div class="td" style="left:928.20px;width:81.76px;top:346.02px;height:16.18px;line-height:16.18px">01.02.2022</div>
<div class="td r" style="left:1056.20px;width:60.11px;top:346.02px;height:16.18px;line-height:16.18px">1</div>
<div class="td" style="left:1110.90px;width:83.30px;top:346.02px;height:16.18px;line-height:16.18px">20.09.2019</div>
<div class="cb" style="top:363.20px"></div>
<div class="td" style="left:140.70px;width:89.56px;top:362.20px;height:16.18px;line-height:16.18px">3000009544</div>
<div class="td" style="left:222.20px;width:104.18px;top:362.20px;height:16.18px;line-height:16.18px">10001-1007-02</div>
<div class="td" style="left:317.00px;width:91.21px;top:362.20px;height:16.18px;line-height:16.18px">Bosch Klaus</div>
<div class="td" style="left:400.00px;width:104.29px;top:362.20px;height:16.18px;line-height:16.18px">01.03.2019</div>
<div class="td" style="left:494.90px;width:58.35px;top:362.20px;height:16.18px;line-height:16.18px">30.04.2020</div>
<div class="td r" style="left:548.00px;width:124.40px;top:362.20px;height:16.18px;line-height:16.18px">288,04</div>
<div class="td r" style="left:661.20px;width:154.40px;top:362.20px;height:16.18px;line-height:16.18px">288,04</div>
<div class="td r" style="left:801.70px;width:91.54px;top:362.20px;height:16.18px;line-height:16.18px">313,93</div>
<div class="td r" style="left:885.00px;width:47.47px;top:362.20px;height:16.18px;line-height:16.18px">0,92</div>
<div class="td" style="left:928.20px;width:81.76px;top:362.20px;height:16.18px;line-height:16.18px">01.02.2022</div>
<div class="td r" style="left:1056.20px;width:60.11px;top:362.20px;height:16.18px;line-height:16.18px">1</div>
<div class="td" style="left:1110.90px;width:83.30px;top:362.20px;height:16.18px;line-height:16.18px">30.09.2020</div>
<div class="cb" style="top:379.38px"></div>
<div class="td" style="left:140.70px;width:89.56px;top:378.38px;height:16.18px;line-height:16.18px">3000006279</div>
<div class="td" style="left:222.20px;width:104.18px;top:378.38px;height:16.18px;line-height:16.18px">10001-1017-02</div>
<div class="td" style="left:317.00px;width:91.21px;top:378.38px;height:16.18px;line-height:16.18px">Kersten Andree</div>
<div class="td" style="left:400.00px;width:104.29px;top:378.38px;height:16.18px;line-height:16.18px">01.01.2014</div>
<div class="td r" style="left:548.00px;width:124.40px;top:378.38px;height:16.18px;line-height:16.18px">138,92</div>
<div class="td r" style="left:661.20px;width:154.40px;top:378.38px;height:16.18px;line-height:16.18px">138,92</div>
<div class="td r" style="left:801.70px;width:91.54px;top:378.38px;height:16.18px;line-height:16.18px">437,36</div>
<div class="td r" style="left:885.00px;width:47.47px;top:378.38px;height:16.18px;line-height:16.18px">0,32</div>
<div class="td" style="left:928.20px;width:81.76px;top:378.38px;height:16.18px;line-height:16.18px">01.02.2022</div>
<div class="td r" style="left:1056.20px;width:60.11px;top:378.38px;height:16.18px;line-height:16.18px">1</div>
<div class="td" style="left:1110.90px;width:83.30px;top:378.38px;height:16.18px;line-height:16.18px">20.09.2019</div>
<div class="cb" style="top:395.56px"></div>
<div class="td" style="left:140.70px;width:89.56px;top:394.56px;height:16.18px;line-height:16.18px">3000003255</div>
<div class="td" style="left:222.20px;width:104.18px;top:394.56px;height:16.18px;line-height:16.18px">10001-1009-01</div>
<div class="td" style="left:317.00px;width:91.21px;top:394.56px;height:16.18px;line-height:16.18px">Olessya Drewniok</div>
<div class="td" style="left:400.00px;width:104.29px;top:394.56px;height:16.18px;line-height:16.18px">01.03.2010</div>
<div class="td r" style="left:548.00px;width:124.40px;top:394.56px;height:16.18px;line-height:16.18px">107,98</div>
<div class="td r" style="left:661.20px;width:154.40px;top:394.56px;height:16.18px;line-height:16.18px">107,98</div>
<div class="td r" style="left:801.70px;width:91.54px;top:394.56px;height:16.18px;line-height:16.18px">409,00</div>
<div class="td r" style="left:885.00px;width:47.47px;top:394.56px;height:16.18px;line-height:16.18px">0,26</div>
<div class="td" style="left:928.20px;width:81.76px;top:394.56px;height:16.18px;line-height:16.18px">01.02.2022</div>
<div class="td r" style="left:1056.20px;width:60.11px;top:394.56px;height:16.18px;line-height:16.18px">1</div>
<div class="td" style="left:1110.90px;width:83.30px;top:394.56px;height:16.18px;line-height:16.18px">20.09.2019</div>
<div class="cb" style="top:411.74px"></div>
<div class="td" style="left:140.70px;width:89.56px;top:410.74px;height:16.18px;line-height:16.18px">3000003076</div>
<div class="td" style="left:222.20px;width:104.18px;top:410.74px;height:16.18px;line-height:16.18px">10001-1001-01</div>
<div class="td" style="left:317.00px;width:91.21px;top:410.74px;height:16.18px;line-height:16.18px">Jane Dabrowski</div>
<div class="td" style="left:400.00px;width:104.29px;top:410.74px;height:16.18px;line-height:16.18px">16.12.2008</div>
<div class="td" style="left:494.90px;width:58.35px;top:410.74px;height:16.18px;line-height:16.18px">31.08.2018</div>
<div class="td r" style="left:548.00px;width:124.40px;top:410.74px;height:16.18px;line-height:16.18px">0,13</div>
<div class="td r" style="left:661.20px;width:154.40px;top:410.74px;height:16.18px;line-height:16.18px">0,13</div>
<div class="td r" style="left:801.70px;width:91.54px;top:410.74px;height:16.18px;line-height:16.18px">526,69</div>
<div class="td r" style="left:885.00px;width:47.47px;top:410.74px;height:16.18px;line-height:16.18px">0,00</div>
<div class="td" style="left:928.20px;width:81.76px;top:410.74px;height:16.18px;line-height:16.18px">01.05.2020</div>
<div class="td r" style="left:1056.20px;width:60.11px;top:410.74px;height:16.18px;line-height:16.18px">2</div>
<div class="td" style="left:1110.90px;width:83.30px;top:410.74px;height:16.18px;line-height:16.18px">20.04.2019</div>
<div class="cb" style="top:427.92px"></div>
<div class="td" style="left:140.70px;width:89.56px;top:426.92px;height:16.18px;line-height:16.18px">3000006435</div>
<div class="td" style="left:222.20px;width:104.18px;top:426.92px;height:16.18px;line-height:16.18px">10001-1005-01</div>
<div class="td" style="left:317.00px;width:91.21px;top:426.92px;height:16.18px;line-height:16.18px">Sevim Manger</div>
<div class="td" style="left:400.00px;width:104.29px;top:426.92px;height:16.18px;line-height:16.18px">01.07.2015</div>
<div class="td" style="left:494.90px;width:58.35px;top:426.92px;height:16.18px;line-height:16.18px">31.08.2018</div>
<div class="td r" style="left:548.00px;width:124.40px;top:426.92px;height:16.18px;line-height:16.18px">0,12</div>
<div class="td r" style="left:661.20px;width:154.40px;top:426.92px;height:16.18px;line-height:16.18px">0,12</div>
<div class="td r" style="left:801.70px;width:91.54px;top:426.92px;height:16.18px;line-height:16.18px">609,92</div>
<div class="td r" style="left:885.00px;width:47.47px;top:426.92px;height:16.18px;line-height:16.18px">0,00</div>
<div class="td" style="left:928.20px;width:81.76px;top:426.92px;height:16.18px;line-height:16.18px">01.05.2020</div>
<div class="td r" style="left:1056.20px;width:60.11px;top:426.92px;height:16.18px;line-height:16.18px">2</div>
<div class="td" style="left:1110.90px;width:83.30px;top:426.92px;height:16.18px;line-height:16.18px">20.04.2019</div>
<div class="cb" style="top:444.10px"></div>
<div class="td" style="left:140.70px;width:89.56px;top:443.10px;height:16.18px;line-height:16.18px">3000000410</div>
<div class="td" style="left:222.20px;width:104.18px;top:443.10px;height:16.18px;line-height:16.18px">10001-1004-01</div>
<div class="td" style="left:317.00px;width:91.21px;top:443.10px;height:16.18px;line-height:16.18px">Cindy Khalifa</div>
<div class="td" style="left:400.00px;width:104.29px;top:443.10px;height:16.18px;line-height:16.18px">01.01.2000</div>
<div class="td" style="left:494.90px;width:58.35px;top:443.10px;height:16.18px;line-height:16.18px">31.08.2018</div>
<div class="td r" style="left:548.00px;width:124.40px;top:443.10px;height:16.18px;line-height:16.18px">0,10</div>
<div class="td r" style="left:661.20px;width:154.40px;top:443.10px;height:16.18px;line-height:16.18px">0,10</div>
<div class="td r" style="left:801.70px;width:91.54px;top:443.10px;height:16.18px;line-height:16.18px">414,04</div>
<div class="td r" style="left:885.00px;width:47.47px;top:443.10px;height:16.18px;line-height:16.18px">0,00</div>
<div class="td" style="left:928.20px;width:81.76px;top:443.10px;height:16.18px;line-height:16.18px">01.05.2020</div>
<div class="cb" style="top:460.28px"></div>
<div class="td" style="left:140.70px;width:89.56px;top:459.28px;height:16.18px;line-height:16.18px">3000006518</div>
<div class="td" style="left:222.20px;width:104.18px;top:459.28px;height:16.18px;line-height:16.18px">10001-1002-02</div>
<div class="td" style="left:317.00px;width:91.21px;top:459.28px;height:16.18px;line-height:16.18px">Donald Benner</div>
<div class="td" style="left:400.00px;width:104.29px;top:459.28px;height:16.18px;line-height:16.18px">21.04.2016</div>
<div class="td" style="left:494.90px;width:58.35px;top:459.28px;height:16.18px;line-height:16.18px">31.08.2018</div>
<div class="td r" style="left:548.00px;width:124.40px;top:459.28px;height:16.18px;line-height:16.18px">0,08</div>
<div class="td r" style="left:661.20px;width:154.40px;top:459.28px;height:16.18px;line-height:16.18px">0,08</div>
<div class="td r" style="left:801.70px;width:91.54px;top:459.28px;height:16.18px;line-height:16.18px">352,45</div>
<div class="td r" style="left:885.00px;width:47.47px;top:459.28px;height:16.18px;line-height:16.18px">0,00</div>
<div class="td" style="left:928.20px;width:81.76px;top:459.28px;height:16.18px;line-height:16.18px">01.05.2020</div>
<div class="cb" style="top:476.46px"></div>
<div class="td" style="left:140.70px;width:89.56px;top:475.46px;height:16.18px;line-height:16.18px">3000003486</div>
<div class="td" style="left:222.20px;width:104.18px;top:475.46px;height:16.18px;line-height:16.18px">10001-1003-02</div>
<div class="td" style="left:317.00px;width:91.21px;top:475.46px;height:16.18px;line-height:16.18px">Sergei Muche</div>
<div class="td" style="left:400.00px;width:104.29px;top:475.46px;height:16.18px;line-height:16.18px">01.04.2016</div>
<div class="td" style="left:494.90px;width:58.35px;top:475.46px;height:16.18px;line-height:16.18px">31.08.2018</div>
<div class="td r" style="left:548.00px;width:124.40px;top:475.46px;height:16.18px;line-height:16.18px">0,08</div>
<div class="td r" style="left:661.20px;width:154.40px;top:475.46px;height:16.18px;line-height:16.18px">0,08</div>
<div class="td r" style="left:801.70px;width:91.54px;top:475.46px;height:16.18px;line-height:16.18px">363,76</div>
<div class="td r" style="left:885.00px;width:47.47px;top:475.46px;height:16.18px;line-height:16.18px">0,00</div>
<div class="td" style="left:928.20px;width:81.76px;top:475.46px;height:16.18px;line-height:16.18px">01.05.2020</div>
<div class="cb" style="top:492.64px"></div>
<div class="td" style="left:140.70px;width:89.56px;top:491.64px;height:16.18px;line-height:16.18px">3000004775</div>
<div class="td" style="left:222.20px;width:104.18px;top:491.64px;height:16.18px;line-height:16.18px">10001-1007-01</div>
<div class="td" style="left:317.00px;width:91.21px;top:491.64px;height:16.18px;line-height:16.18px">Hendrik Stoye</div>
<div class="td" style="left:400.00px;width:104.29px;top:491.64px;height:16.18px;line-height:16.18px">01.08.2005</div>
<div class="td" style="left:494.90px;width:58.35px;top:491.64px;height:16.18px;line-height:16.18px">31.08.2018</div>
<div class="td r" style="left:548.00px;width:124.40px;top:491.64px;height:16.18px;line-height:16.18px">0,08</div>
<div class="td r" style="left:661.20px;width:154.40px;top:491.64px;height:16.18px;line-height:16.18px">0,08</div>
<div class="td r" style="left:801.70px;width:91.54px;top:491.64px;height:16.18px;line-height:16.18px">319,91</div>
<div class="td r" style="left:885.00px;width:47.47px;top:491.64px;height:16.18px;line-height:16.18px">0,00</div>
<div class="td" style="left:928.20px;width:81.76px;top:491.64px;height:16.18px;line-height:16.18px">01.05.2020</div>
<div class="td r" style="left:1056.20px;width:60.11px;top:491.64px;height:16.18px;line-height:16.18px">2</div>
<div class="td" style="left:1110.90px;width:83.30px;top:491.64px;height:16.18px;line-height:16.18px">20.04.2019</div>
<div class="cb" style="top:508.82px"></div>
<div class="td" style="left:140.70px;width:89.56px;top:507.82px;height:16.18px;line-height:16.18px">3000005275</div>
<div class="td" style="left:222.20px;width:104.18px;top:507.82px;height:16.18px;line-height:16.18px">10001-8004-01</div>
<div class="td" style="left:317.00px;width:91.21px;top:507.82px;height:16.18px;line-height:16.18px">Elvira Roll</div>
<div class="td" style="left:400.00px;width:104.29px;top:507.82px;height:16.18px;line-height:16.18px">03.10.2019</div>
<div class="td" style="left:494.90px;width:58.35px;top:507.82px;height:16.18px;line-height:16.18px">02.09.2023</div>
<div class="td r" style="left:548.00px;width:124.40px;top:507.82px;height:16.18px;line-height:16.18px">11,53-</div>
<div class="td r" style="left:661.20px;width:154.40px;top:507.82px;height:16.18px;line-height:16.18px">11,53-</div>
<div class="td r" style="left:801.70px;width:91.54px;top:507.82px;height:16.18px;line-height:16.18px">1.113,00</div>
<div class="td r" style="left:885.00px;width:47.47px;top:507.82px;height:16.18px;line-height:16.18px">0,01-</div>
<div class="td" style="left:928.20px;width:81.76px;top:507.82px;height:16.18px;line-height:16.18px">01.02.2022</div>
<div class="cb" style="top:525.00px"></div>
<div class="td" style="left:140.70px;width:89.56px;top:524.00px;height:16.18px;line-height:16.18px">3000000366</div>
<div class="td" style="left:222.20px;width:104.18px;top:524.00px;height:16.18px;line-height:16.18px">10001-1019-01</div>
<div class="td" style="left:317.00px;width:91.21px;top:524.00px;height:16.18px;line-height:16.18px">Svea Grigutsch</div>
<div class="td" style="left:400.00px;width:104.29px;top:524.00px;height:16.18px;line-height:16.18px">01.12.1998</div>
<div class="td r" style="left:548.00px;width:124.40px;top:524.00px;height:16.18px;line-height:16.18px">61,22-</div>
<div class="td r" style="left:661.20px;width:154.40px;top:524.00px;height:16.18px;line-height:16.18px">61,22-</div>
<div class="td r" style="left:801.70px;width:91.54px;top:524.00px;height:16.18px;line-height:16.18px">379,94</div>
<div class="td r" style="left:885.00px;width:47.47px;top:524.00px;height:16.18px;line-height:16.18px">0,16-</div>
<div class="td" style="left:928.20px;width:81.76px;top:524.00px;height:16.18px;line-height:16.18px">01.02.2022</div>
<div class="td r" style="left:1056.20px;width:60.11px;top:524.00px;height:16.18px;line-height:16.18px">1</div>
<div class="td" style="left:1110.90px;width:83.30px;top:524.00px;height:16.18px;line-height:16.18px">20.09.2019</div>
<div class="cb" style="top:541.18px"></div>
<div class="td" style="left:140.70px;width:89.56px;top:540.18px;height:16.18px;line-height:16.18px">3000009686</div>
<div class="td" style="left:222.20px;width:104.18px;top:540.18px;height:16.18px;line-height:16.18px">10001-8005-01</div>
<div class="td" style="left:317.00px;width:91.21px;top:540.18px;height:16.18px;line-height:16.18px">Carl Wening</div>
<div class="td" style="left:400.00px;width:104.29px;top:540.18px;height:16.18px;line-height:16.18px">01.10.2018</div>
<div class="td r" style="left:548.00px;width:124.40px;top:540.18px;height:16.18px;line-height:16.18px">71,07-</div>
<div class="td r" style="left:661.20px;width:154.40px;top:540.18px;height:16.18px;line-height:16.18px">71,07-</div>
<div class="td r" style="left:801.70px;width:91.54px;top:540.18px;height:16.18px;line-height:16.18px">816,00</div>
<div class="td r" style="left:885.00px;width:47.47px;top:540.18px;height:16.18px;line-height:16.18px">0,09-</div>
<div class="td" style="left:928.20px;width:81.76px;top:540.18px;height:16.18px;line-height:16.18px">09.11.2021</div>
<div class="td r" style="left:1056.20px;width:60.11px;top:540.18px;height:16.18px;line-height:16.18px">3</div>
<div class="td" style="left:1110.90px;width:83.30px;top:540.18px;height:16.18px;line-height:16.18px">10.01.2022</div>
<div class="cb" style="top:557.36px"></div>
<div class="td" style="left:140.70px;width:89.56px;top:556.36px;height:16.18px;line-height:16.18px">3000001675</div>
<div class="td" style="left:222.20px;width:104.18px;top:556.36px;height:16.18px;line-height:16.18px">10001-1020-02</div>
<div class="td" style="left:317.00px;width:91.21px;top:556.36px;height:16.18px;line-height:16.18px">Cuma Fichtner</div>
<div class="td" style="left:400.00px;width:104.29px;top:556.36px;height:16.18px;line-height:16.18px">01.12.2004</div>
<div class="td r" style="left:548.00px;width:124.40px;top:556.36px;height:16.18px;line-height:16.18px">151,68-</div>
<div class="td r" style="left:661.20px;width:154.40px;top:556.36px;height:16.18px;line-height:16.18px">151,68-</div>
<div class="td r" style="left:801.70px;width:91.54px;top:556.36px;height:16.18px;line-height:16.18px">476,44</div>
<div class="td r" style="left:885.00px;width:47.47px;top:556.36px;height:16.18px;line-height:16.18px">0,32-</div>
<div class="td" style="left:928.20px;width:81.76px;top:556.36px;height:16.18px;line-height:16.18px">01.02.2022</div>
<div class="cb" style="top:573.54px"></div>
<div class="td" style="left:140.70px;width:89.56px;top:572.54px;height:16.18px;line-height:16.18px">3000000491</div>
<div class="td" style="left:222.20px;width:104.18px;top:572.54px;height:16.18px;line-height:16.18px">10001-1016-01</div>
<div class="td" style="left:317.00px;width:91.21px;top:572.54px;height:16.18px;line-height:16.18px">Na Stahr</div>
<div class="td" style="left:400.00px;width:104.29px;top:572.54px;height:16.18px;line-height:16.18px">16.03.1988</div>
<div class="td r" style="left:548.00px;width:124.40px;top:572.54px;height:16.18px;line-height:16.18px">185,49-</div>
<div class="td r" style="left:661.20px;width:154.40px;top:572.54px;height:16.18px;line-height:16.18px">185,49-</div>
<div class="td r" style="left:801.70px;width:91.54px;top:572.54px;height:16.18px;line-height:16.18px">600,90</div>
<div class="td r" style="left:885.00px;width:47.47px;top:572.54px;height:16.18px;line-height:16.18px">0,31-</div>
<div class="td" style="left:928.20px;width:81.76px;top:572.54px;height:16.18px;line-height:16.18px">01.02.2022</div>
<div class="td r" style="left:1056.20px;width:60.11px;top:572.54px;height:16.18px;line-height:16.18px">1</div>
<div class="td" style="left:1110.90px;width:83.30px;top:572.54px;height:16.18px;line-height:16.18px">20.09.2019</div>
<div class="cb" style="top:589.72px"></div>
<div class="td" style="left:140.70px;width:89.56px;top:588.72px;height:16.18px;line-height:16.18px">3000004393</div>
<div class="td" style="left:222.20px;width:104.18px;top:588.72px;height:16.18px;line-height:16.18px">10001-1018-03</div>
<div class="td" style="left:317.00px;width:91.21px;top:588.72px;height:16.18px;line-height:16.18px">Sara Dirks</div>
<div class="td" style="left:400.00px;width:104.29px;top:588.72px;height:16.18px;line-height:16.18px">01.09.2016</div>
<div class="td" style="left:494.90px;width:58.35px;top:588.72px;height:16.18px;line-height:16.18px">31.12.2022</div>
<div class="td r" style="left:548.00px;width:124.40px;top:588.72px;height:16.18px;line-height:16.18px">220,32-</div>
<div class="td r" style="left:661.20px;width:154.40px;top:588.72px;height:16.18px;line-height:16.18px">220,32-</div>
<div class="td r" style="left:801.70px;width:91.54px;top:588.72px;height:16.18px;line-height:16.18px">406,42</div>
<div class="td r" style="left:885.00px;width:47.47px;top:588.72px;height:16.18px;line-height:16.18px">0,54-</div>
<div class="td" style="left:928.20px;width:81.76px;top:588.72px;height:16.18px;line-height:16.18px">01.02.2022</div>
<div class="td r" style="left:1056.20px;width:60.11px;top:588.72px;height:16.18px;line-height:16.18px">1</div>
<div class="td" style="left:1110.90px;width:83.30px;top:588.72px;height:16.18px;line-height:16.18px">20.09.2019</div>
<div class="cb" style="top:605.90px"></div>
<div class="td" style="left:140.70px;width:89.56px;top:604.90px;height:16.18px;line-height:16.18px">3000002776</div>
<div class="td" style="left:222.20px;width:104.18px;top:604.90px;height:16.18px;line-height:16.18px">10001-1010-01</div>
<div class="td" style="left:317.00px;width:91.21px;top:604.90px;height:16.18px;line-height:16.18px">Chaouki Kuhfuß</div>
<div class="td" style="left:400.00px;width:104.29px;top:604.90px;height:16.18px;line-height:16.18px">01.03.1999</div>
<div class="td" style="left:494.90px;width:58.35px;top:604.90px;height:16.18px;line-height:16.18px">30.09.2021</div>
<div class="td r" style="left:548.00px;width:124.40px;top:604.90px;height:16.18px;line-height:16.18px">255,93-</div>
<div class="td r" style="left:661.20px;width:154.40px;top:604.90px;height:16.18px;line-height:16.18px">255,93-</div>
<div class="td r" style="left:801.70px;width:91.54px;top:604.90px;height:16.18px;line-height:16.18px">490,76</div>
<div class="td r" style="left:885.00px;width:47.47px;top:604.90px;height:16.18px;line-height:16.18px">0,52-</div>
<div class="td" style="left:928.20px;width:81.76px;top:604.90px;height:16.18px;line-height:16.18px">01.02.2022</div>
<div class="td r" style="left:1056.20px;width:60.11px;top:604.90px;height:16.18px;line-height:16.18px">1</div>
<div class="td" style="left:1110.90px;width:83.30px;top:604.90px;height:16.18px;line-height:16.18px">20.09.2019</div>
<div class="cb" style="top:622.08px"></div>
<div class="td" style="left:140.70px;width:89.56px;top:621.08px;height:16.18px;line-height:16.18px">3000003150</div>
<div class="td" style="left:222.20px;width:104.18px;top:621.08px;height:16.18px;line-height:16.18px">10001-1011-02</div>
<div class="td" style="left:317.00px;width:91.21px;top:621.08px;height:16.18px;line-height:16.18px">Karoline Löhrmann</div>
<div class="td" style="left:400.00px;width:104.29px;top:621.08px;height:16.18px;line-height:16.18px">01.06.2009</div>
<div class="td r" style="left:548.00px;width:124.40px;top:621.08px;height:16.18px;line-height:16.18px">1.100,59-</div>
<div class="td r" style="left:661.20px;width:154.40px;top:621.08px;height:16.18px;line-height:16.18px">1.100,59-</div>
<div class="td r" style="left:801.70px;width:91.54px;top:621.08px;height:16.18px;line-height:16.18px">504,14</div>
<div class="td r" style="left:885.00px;width:47.47px;top:621.08px;height:16.18px;line-height:16.18px">2,18-</div>
<div class="td" style="left:928.20px;width:81.76px;top:621.08px;height:16.18px;line-height:16.18px">01.02.2022</div>
<div class="td r" style="left:1056.20px;width:60.11px;top:621.08px;height:16.18px;line-height:16.18px">1</div>
<div class="td" style="left:1110.90px;width:83.30px;top:621.08px;height:16.18px;line-height:16.18px">20.09.2019</div>
<div class="cb" style="top:638.26px"></div>
<div class="td" style="left:140.70px;width:89.56px;top:637.26px;height:16.18px;line-height:16.18px">3000009576</div>
<div class="td" style="left:222.20px;width:104.18px;top:637.26px;height:16.18px;line-height:16.18px">10001-1005-02</div>
<div class="td" style="left:317.00px;width:91.21px;top:637.26px;height:16.18px;line-height:16.18px">Robert Meyer</div>
<div class="td" style="left:400.00px;width:104.29px;top:637.26px;height:16.18px;line-height:16.18px">01.03.2019</div>
<div class="td" style="left:494.90px;width:58.35px;top:637.26px;height:16.18px;line-height:16.18px">30.04.2021</div>
<div class="td r" style="left:548.00px;width:124.40px;top:637.26px;height:16.18px;line-height:16.18px">1.341,67-</div>
<div class="td r" style="left:661.20px;width:154.40px;top:637.26px;height:16.18px;line-height:16.18px">1.341,67-</div>
<div class="td r" style="left:801.70px;width:91.54px;top:637.26px;height:16.18px;line-height:16.18px">1.043,87</div>
<div class="td r" style="left:885.00px;width:47.47px;top:637.26px;height:16.18px;line-height:16.18px">1,29-</div>
<div class="td" style="left:928.20px;width:81.76px;top:637.26px;height:16.18px;line-height:16.18px">01.02.2022</div>
<svg class="abs" style="left:0;top:0" width="80" height="667" viewBox="0 0 80 667"><circle cx="56.6" cy="126.10" r="3.75" fill="none" stroke="#d42f48" stroke-width="1.55"/><circle cx="56.6" cy="142.28" r="3.75" fill="none" stroke="#d42f48" stroke-width="1.55"/><path d="M56.4,154.86 L60.2,161.66 L52.6,161.66 Z" fill="#e8730c" stroke="#e8730c" stroke-width="0.4" stroke-linejoin="round"/><circle cx="56.6" cy="174.64" r="3.75" fill="none" stroke="#d42f48" stroke-width="1.55"/><path d="M56.4,187.22 L60.2,194.02 L52.6,194.02 Z" fill="#e8730c" stroke="#e8730c" stroke-width="0.4" stroke-linejoin="round"/><circle cx="56.6" cy="207.00" r="3.75" fill="none" stroke="#d42f48" stroke-width="1.55"/><path d="M56.4,219.58 L60.2,226.38 L52.6,226.38 Z" fill="#e8730c" stroke="#e8730c" stroke-width="0.4" stroke-linejoin="round"/><rect x="52.7" y="235.66" width="7.6" height="7.4" rx="0.5" fill="#0c843c"/><path d="M56.4,251.94 L60.2,258.74 L52.6,258.74 Z" fill="#e8730c" stroke="#e8730c" stroke-width="0.4" stroke-linejoin="round"/><path d="M56.4,268.12 L60.2,274.92 L52.6,274.92 Z" fill="#e8730c" stroke="#e8730c" stroke-width="0.4" stroke-linejoin="round"/><path d="M56.4,284.30 L60.2,291.10 L52.6,291.10 Z" fill="#e8730c" stroke="#e8730c" stroke-width="0.4" stroke-linejoin="round"/><rect x="52.7" y="300.38" width="7.6" height="7.4" rx="0.5" fill="#0c843c"/><path d="M56.4,316.66 L60.2,323.46 L52.6,323.46 Z" fill="#e8730c" stroke="#e8730c" stroke-width="0.4" stroke-linejoin="round"/><rect x="52.7" y="332.74" width="7.6" height="7.4" rx="0.5" fill="#0c843c"/><circle cx="56.6" cy="352.62" r="3.75" fill="none" stroke="#d42f48" stroke-width="1.55"/><rect x="52.7" y="365.10" width="7.6" height="7.4" rx="0.5" fill="#0c843c"/><rect x="52.7" y="381.28" width="7.6" height="7.4" rx="0.5" fill="#0c843c"/><rect x="52.7" y="397.46" width="7.6" height="7.4" rx="0.5" fill="#0c843c"/><rect x="52.7" y="413.64" width="7.6" height="7.4" rx="0.5" fill="#0c843c"/><rect x="52.7" y="429.82" width="7.6" height="7.4" rx="0.5" fill="#0c843c"/><rect x="52.7" y="446.00" width="7.6" height="7.4" rx="0.5" fill="#0c843c"/><rect x="52.7" y="462.18" width="7.6" height="7.4" rx="0.5" fill="#0c843c"/><rect x="52.7" y="478.36" width="7.6" height="7.4" rx="0.5" fill="#0c843c"/><rect x="52.7" y="494.54" width="7.6" height="7.4" rx="0.5" fill="#0c843c"/><rect x="52.7" y="510.72" width="7.6" height="7.4" rx="0.5" fill="#0c843c"/><rect x="52.7" y="526.90" width="7.6" height="7.4" rx="0.5" fill="#0c843c"/><rect x="52.7" y="543.08" width="7.6" height="7.4" rx="0.5" fill="#0c843c"/><rect x="52.7" y="559.26" width="7.6" height="7.4" rx="0.5" fill="#0c843c"/><rect x="52.7" y="575.44" width="7.6" height="7.4" rx="0.5" fill="#0c843c"/><rect x="52.7" y="591.62" width="7.6" height="7.4" rx="0.5" fill="#0c843c"/><rect x="52.7" y="607.80" width="7.6" height="7.4" rx="0.5" fill="#0c843c"/><rect x="52.7" y="623.98" width="7.6" height="7.4" rx="0.5" fill="#0c843c"/><rect x="52.7" y="640.16" width="7.6" height="7.4" rx="0.5" fill="#0c843c"/></svg>
</div>
<div class="tbot"></div><div id="hscroll"></div>
<div id="vscroll"></div>
<svg class="abs" style="left:0;top:96px" width="700" height="22" viewBox="0 96 700 22">
  <path d="M36.2,106.4 L36.2,104.3 L40,104.3 L40.8,105.2" fill="none" stroke="#8c8c8c" stroke-width="1"/>
  <path d="M37.6,106 L37.8,105.6 L41.3,105.6 L42.6,107 L42.6,110.6 L37.6,110.6 Z" fill="#fff" stroke="#808080" stroke-width="1.1"/>
  <path d="M36.2,104.3 L37.6,106" stroke="#8c8c8c" stroke-width="0.9"/>
  <path d="M129.8,105.4 Q132,101.6 134.3,105.4 Z" fill="#c8102e"/>
  <path d="M557.6,105.3 L555.3,105.3 L556.6,107 L555.3,108.8 L557.8,108.8" fill="none" stroke="#333" stroke-width="1.2"/>
  <path d="M671.4,105.3 L669.1,105.3 L670.4,107 L669.1,108.8 L671.6,108.8" fill="none" stroke="#333" stroke-width="1.2"/>
</svg>

</body></html>
